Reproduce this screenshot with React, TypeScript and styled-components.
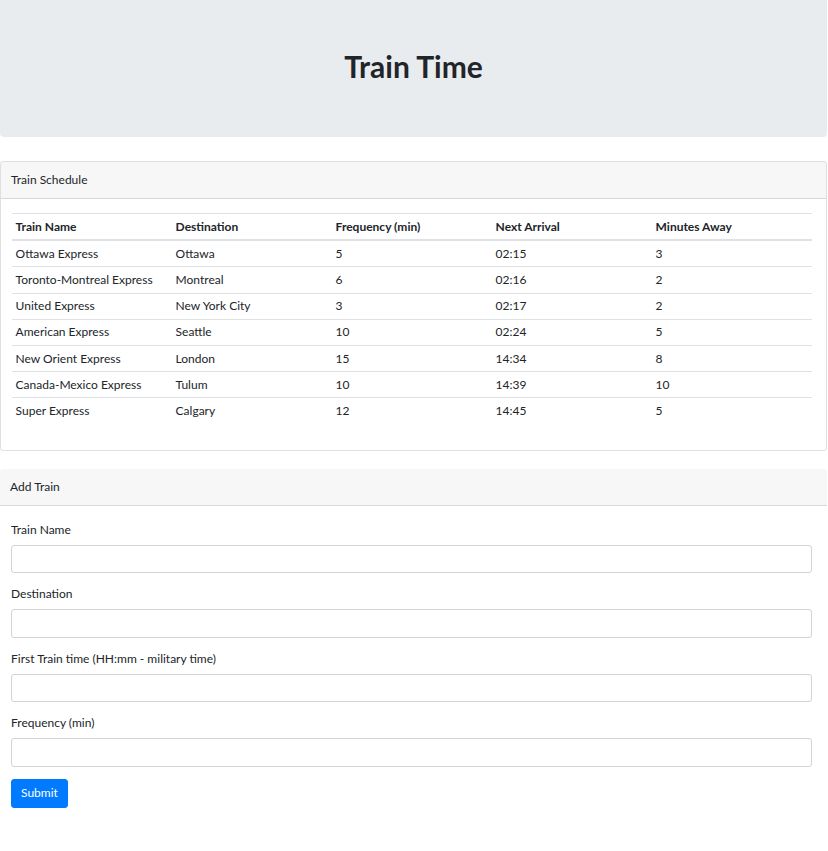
import React from "react";
import styled, { createGlobalStyle } from "styled-components";

const GlobalStyle = createGlobalStyle`
  html, body { margin: 0; padding: 0; background: #fff; }
  body {
    font-family: Lato, "Open Sans", "Liberation Sans", sans-serif;
    font-size: 12px;
    line-height: 18px;
    color: #212529;
  }
  * { box-sizing: border-box; }
`;

const Page = styled.div`
  width: 827px;
`;

const Jumbotron = styled.header`
  background: #e9ecef;
  border-radius: 0 0 4px 4px;
  padding: 48px 24px 47px;
  margin-bottom: 24px;
  text-align: center;
`;

const Title = styled.h1`
  margin: 0 0 6px;
  font-size: 30px;
  line-height: 36px;
  font-weight: 700;
  color: #212529;
`;

const Card = styled.section<{ $bordered?: boolean }>`
  border: ${(p) => (p.$bordered ? "1px solid rgba(0,0,0,0.125)" : "none")};
  border-radius: 3px;
  margin-bottom: 18px;
  overflow: hidden;
`;

const CardHeader = styled.div`
  background: rgba(0, 0, 0, 0.03);
  border-bottom: 1px solid rgba(0, 0, 0, 0.125);
  padding: 9px 10px;
  line-height: 18px;
`;

const CardBody = styled.div`
  padding: 14px 14px 14px 11px;
`;

const FormBody = styled.div`
  padding: 15px 15px 15px 11px;
`;

const Table = styled.table`
  width: 100%;
  table-layout: fixed;
  border-collapse: collapse;
  margin-bottom: 12px;
`;

const Th = styled.th`
  text-align: left;
  font-weight: 700;
  padding: 3.6px 3.6px;
  border-top: 1px solid #dee2e6;
  border-bottom: 2px solid #dee2e6;
  line-height: 18px;
`;

const Td = styled.td`
  padding: 3.6px 3.6px;
  border-top: 1px solid #dee2e6;
  line-height: 18px;
`;

const FormGroup = styled.div`
  margin-bottom: 12px;
`;

const Label = styled.label`
  display: block;
  margin-bottom: 6px;
  line-height: 18px;
`;

const Input = styled.input`
  display: block;
  width: 100%;
  height: 28.5px;
  padding: 4.5px 9px;
  font: inherit;
  color: #495057;
  background: #fff;
  border: 1px solid #ced4da;
  border-radius: 3px;
`;

const Button = styled.button`
  font: inherit;
  line-height: 18px;
  color: #fff;
  background: #007bff;
  border: 1px solid #007bff;
  border-radius: 3px;
  padding: 4.5px 9px;
  cursor: pointer;
`;

const rows = [
  ["Ottawa Express", "Ottawa", "5", "02:15", "3"],
  ["Toronto-Montreal Express", "Montreal", "6", "02:16", "2"],
  ["United Express", "New York City", "3", "02:17", "2"],
  ["American Express", "Seattle", "10", "02:24", "5"],
  ["New Orient Express", "London", "15", "14:34", "8"],
  ["Canada-Mexico Express", "Tulum", "10", "14:39", "10"],
  ["Super Express", "Calgary", "12", "14:45", "5"],
];

const heads = ["Train Name", "Destination", "Frequency (min)", "Next Arrival", "Minutes Away"];
const fields = ["Train Name", "Destination", "First Train time (HH:mm - military time)", "Frequency (min)"];

export default function App() {
  return (
    <Page>
      <GlobalStyle />
      <Jumbotron>
        <Title>Train Time</Title>
      </Jumbotron>
      <Card $bordered>
        <CardHeader>Train Schedule</CardHeader>
        <CardBody>
          <Table>
            <thead>
              <tr>
                {heads.map((h) => (
                  <Th key={h}>{h}</Th>
                ))}
              </tr>
            </thead>
            <tbody>
              {rows.map((r) => (
                <tr key={r[0]}>
                  {r.map((c, i) => (
                    <Td key={i}>{c}</Td>
                  ))}
                </tr>
              ))}
            </tbody>
          </Table>
        </CardBody>
      </Card>
      <Card>
        <CardHeader>Add Train</CardHeader>
        <FormBody>
          {fields.map((f) => (
            <FormGroup key={f}>
              <Label>{f}</Label>
              <Input type="text" />
            </FormGroup>
          ))}
          <Button type="button">Submit</Button>
        </FormBody>
      </Card>
    </Page>
  );
}
